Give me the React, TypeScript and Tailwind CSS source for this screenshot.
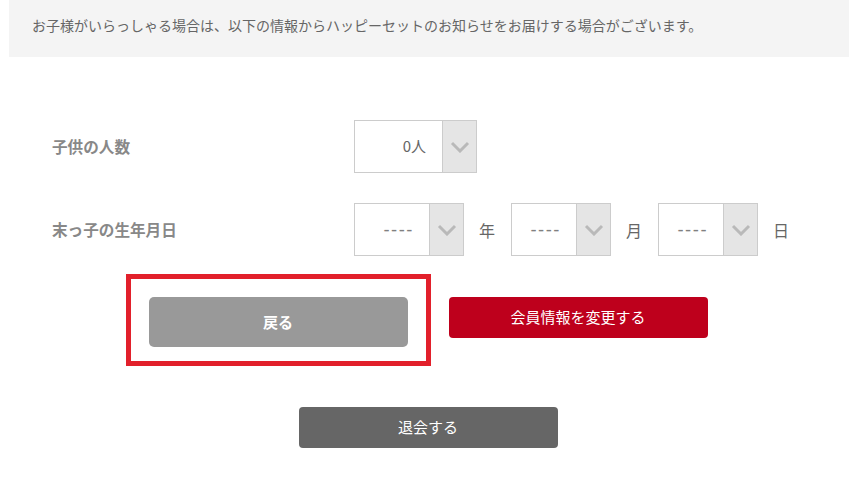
const font = "font-['Noto_Sans_CJK_JP','Noto_Sans',sans-serif]";

type SelectProps = {
  width: string;
  value: string;
  dashed?: boolean;
};

const Chevron = () => (
  <svg width="20" height="12" viewBox="0 0 20 12">
    <polyline
      points="2,2 10,10 18,2"
      fill="none"
      stroke="#b9b9b9"
      strokeWidth="3"
    />
  </svg>
);

const Select = ({ width, value, dashed }: SelectProps) => {
  return (
    <div className={`${width} flex h-[53px] border border-[#cccccc] bg-white`}>
      <div
        className={`flex-1 flex items-center justify-end ${
          dashed
            ? "pr-[15px] tracking-[1.5px] text-[17px] text-[#808080] font-['DejaVu_Sans',sans-serif]"
            : "pr-[16px] text-[15px] text-[#666]"
        }`}
      >
        {value}
      </div>
      <div className="w-[34px] bg-[#e5e5e5] border-l border-[#cccccc] flex items-center justify-center">
        <Chevron />
      </div>
    </div>
  );
};

const Unit = ({ children }: { children: string }) => (
  <span className="pl-[15px] pr-[16px] text-[16px] text-[#666] leading-none">{children}</span>
);

export default function App() {
  return (
    <div className={`w-[859px] h-[477px] bg-white pl-[9px] pr-[10px] overflow-hidden ${font}`}>
      <div className="bg-[#f4f4f4] h-[57px] pl-[23px] pt-[15px] text-[14px] leading-[20px] text-[#666]">
        お子様がいらっしゃる場合は、以下の情報からハッピーセットのお知らせをお届けする場合がございます。
      </div>

      <div className="pl-[43px] pt-[63px]">
        <div className="flex items-center">
          <span className="w-[302px] text-[15.6px] font-bold text-[#888]">子供の人数</span>
          <Select width="w-[123px]" value="0人" />
        </div>

        <div className="flex items-center mt-[30px]">
          <span className="w-[302px] text-[15.6px] font-bold text-[#888]">末っ子の生年月日</span>
          <Select width="w-[110px]" value="----" dashed />
          <Unit>年</Unit>
          <Select width="w-[100px]" value="----" dashed />
          <Unit>月</Unit>
          <Select width="w-[100px]" value="----" dashed />
          <Unit>日</Unit>
        </div>
      </div>

      <div className="mt-[41px] pr-[2px] flex justify-center items-start gap-[41px]">
        <div className="relative">
          <button className="w-[259px] h-[50px] rounded-[5px] bg-[#999999] text-white text-[15px] font-bold">
            戻る
          </button>
          <div className="absolute -left-[23px] -right-[23px] -top-[23px] -bottom-[19px] border-[5px] border-[#e2202b] pointer-events-none" />
        </div>
        <button className="w-[259px] h-[41px] rounded-[4px] bg-[#be001c] text-white text-[15px]">
          会員情報を変更する
        </button>
      </div>

      <div className="mt-[60px] pr-[2px] flex justify-center">
        <button className="w-[259px] h-[41px] rounded-[4px] bg-[#666666] text-white text-[15px]">
          退会する
        </button>
      </div>
    </div>
  );
}
